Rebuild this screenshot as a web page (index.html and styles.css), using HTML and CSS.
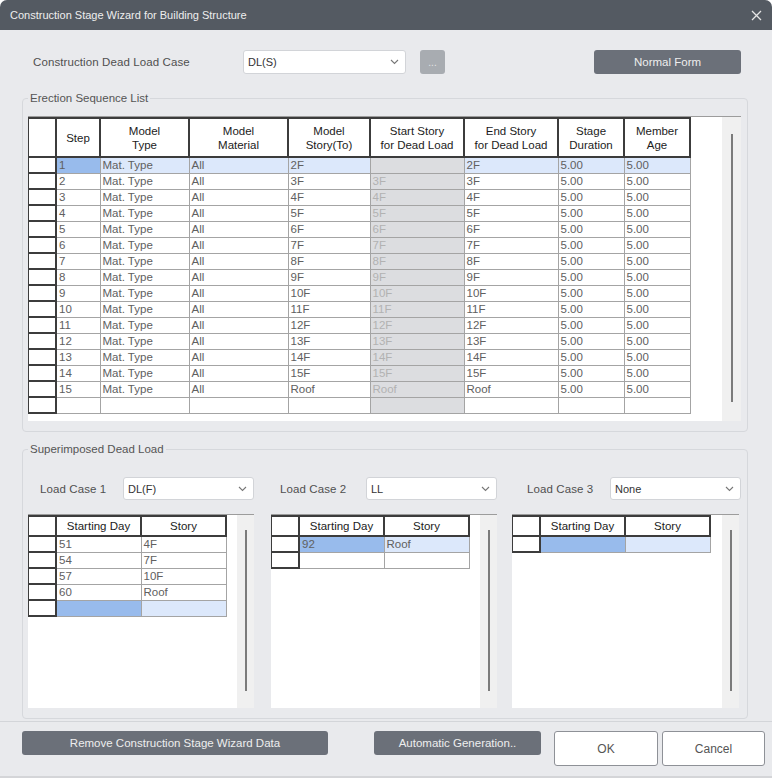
FILE: index.html
```html
<!DOCTYPE html>
<html>
<head>
<meta charset="utf-8">
<title>Construction Stage Wizard for Building Structure</title>
<link rel="stylesheet" href="styles.css">
</head>
<body>
<div class="window">
  <div class="titlebar">
    <span class="title">Construction Stage Wizard for Building Structure</span>
    <svg class="close" width="11" height="11" viewBox="0 0 11 11"><path d="M1 1 L10 10 M10 1 L1 10" stroke="#e6e6e6" stroke-width="1.3" fill="none"/></svg>
  </div>

  <div class="toprow">
    <span class="toplabel">Construction Dead Load Case</span>
    <div class="select sel-dl">
      <span>DL(S)</span>
      <svg width="9" height="6" viewBox="0 0 9 6"><path d="M1 1 L4.5 4.5 L8 1" stroke="#777" stroke-width="1.1" fill="none"/></svg>
    </div>
    <div class="btn-dots">...</div>
    <div class="btn-dark btn-normal">Normal Form</div>
  </div>

  <fieldset class="group group-erect">
    <legend>Erection Sequence List</legend>
    <div class="grid grid-main">
      <div class="grid-body">
        <table class="tbl tbl-main">
          <colgroup>
            <col style="width:28px"><col style="width:44px"><col style="width:89px"><col style="width:99px"><col style="width:82px"><col style="width:94px"><col style="width:94px"><col style="width:66px"><col style="width:66px">
          </colgroup>
          <tr><th></th><th>Step</th><th>Model<br>Type</th><th>Model<br>Material</th><th>Model<br>Story(To)</th><th>Start Story<br>for Dead Load</th><th>End Story<br>for Dead Load</th><th>Stage<br>Duration</th><th>Member<br>Age</th></tr>
          <tr class="sel"><td class="rh"></td><td class="hi">1</td><td>Mat. Type</td><td>All</td><td>2F</td><td class="ss"></td><td>2F</td><td>5.00</td><td>5.00</td></tr>
          <tr><td class="rh"></td><td>2</td><td>Mat. Type</td><td>All</td><td>3F</td><td class="ss">3F</td><td>3F</td><td>5.00</td><td>5.00</td></tr>
          <tr><td class="rh"></td><td>3</td><td>Mat. Type</td><td>All</td><td>4F</td><td class="ss">4F</td><td>4F</td><td>5.00</td><td>5.00</td></tr>
          <tr><td class="rh"></td><td>4</td><td>Mat. Type</td><td>All</td><td>5F</td><td class="ss">5F</td><td>5F</td><td>5.00</td><td>5.00</td></tr>
          <tr><td class="rh"></td><td>5</td><td>Mat. Type</td><td>All</td><td>6F</td><td class="ss">6F</td><td>6F</td><td>5.00</td><td>5.00</td></tr>
          <tr><td class="rh"></td><td>6</td><td>Mat. Type</td><td>All</td><td>7F</td><td class="ss">7F</td><td>7F</td><td>5.00</td><td>5.00</td></tr>
          <tr><td class="rh"></td><td>7</td><td>Mat. Type</td><td>All</td><td>8F</td><td class="ss">8F</td><td>8F</td><td>5.00</td><td>5.00</td></tr>
          <tr><td class="rh"></td><td>8</td><td>Mat. Type</td><td>All</td><td>9F</td><td class="ss">9F</td><td>9F</td><td>5.00</td><td>5.00</td></tr>
          <tr><td class="rh"></td><td>9</td><td>Mat. Type</td><td>All</td><td>10F</td><td class="ss">10F</td><td>10F</td><td>5.00</td><td>5.00</td></tr>
          <tr><td class="rh"></td><td>10</td><td>Mat. Type</td><td>All</td><td>11F</td><td class="ss">11F</td><td>11F</td><td>5.00</td><td>5.00</td></tr>
          <tr><td class="rh"></td><td>11</td><td>Mat. Type</td><td>All</td><td>12F</td><td class="ss">12F</td><td>12F</td><td>5.00</td><td>5.00</td></tr>
          <tr><td class="rh"></td><td>12</td><td>Mat. Type</td><td>All</td><td>13F</td><td class="ss">13F</td><td>13F</td><td>5.00</td><td>5.00</td></tr>
          <tr><td class="rh"></td><td>13</td><td>Mat. Type</td><td>All</td><td>14F</td><td class="ss">14F</td><td>14F</td><td>5.00</td><td>5.00</td></tr>
          <tr><td class="rh"></td><td>14</td><td>Mat. Type</td><td>All</td><td>15F</td><td class="ss">15F</td><td>15F</td><td>5.00</td><td>5.00</td></tr>
          <tr><td class="rh"></td><td>15</td><td>Mat. Type</td><td>All</td><td>Roof</td><td class="ss">Roof</td><td>Roof</td><td>5.00</td><td>5.00</td></tr>
          <tr><td class="rh"></td><td></td><td></td><td></td><td></td><td class="ss"></td><td></td><td></td><td></td></tr>
        </table>
      </div>
      <div class="vscroll vscroll-main"><div class="thumb"></div></div>
    </div>
  </fieldset>

  <fieldset class="group group-super">
    <legend>Superimposed Dead Load</legend>
    <div class="cases">
      <div class="case case1">
        <div class="caserow">
          <span class="caselabel">Load Case 1</span>
          <div class="select sel-case"><span>DL(F)</span><svg width="9" height="6" viewBox="0 0 9 6"><path d="M1 1 L4.5 4.5 L8 1" stroke="#777" stroke-width="1.1" fill="none"/></svg></div>
        </div>
        <div class="grid grid-sub">
          <div class="grid-body">
            <table class="tbl tbl-sub">
              <colgroup><col style="width:28px"><col style="width:85px"><col style="width:85px"></colgroup>
              <tr><th></th><th>Starting Day</th><th>Story</th></tr>
              <tr><td class="rh"></td><td>51</td><td>4F</td></tr>
              <tr><td class="rh"></td><td>54</td><td>7F</td></tr>
              <tr><td class="rh"></td><td>57</td><td>10F</td></tr>
              <tr><td class="rh"></td><td>60</td><td>Roof</td></tr>
              <tr class="sel"><td class="rh"></td><td class="hi"></td><td></td></tr>
            </table>
          </div>
          <div class="vscroll vscroll-sub"><div class="thumb"></div></div>
        </div>
      </div>
      <div class="case case2">
        <div class="caserow">
          <span class="caselabel">Load Case 2</span>
          <div class="select sel-case"><span>LL</span><svg width="9" height="6" viewBox="0 0 9 6"><path d="M1 1 L4.5 4.5 L8 1" stroke="#777" stroke-width="1.1" fill="none"/></svg></div>
        </div>
        <div class="grid grid-sub">
          <div class="grid-body">
            <table class="tbl tbl-sub">
              <colgroup><col style="width:28px"><col style="width:85px"><col style="width:85px"></colgroup>
              <tr><th></th><th>Starting Day</th><th>Story</th></tr>
              <tr class="sel"><td class="rh"></td><td class="hi">92</td><td>Roof</td></tr>
              <tr><td class="rh"></td><td></td><td></td></tr>
            </table>
          </div>
          <div class="vscroll vscroll-sub"><div class="thumb"></div></div>
        </div>
      </div>
      <div class="case case3">
        <div class="caserow">
          <span class="caselabel">Load Case 3</span>
          <div class="select sel-case"><span>None</span><svg width="9" height="6" viewBox="0 0 9 6"><path d="M1 1 L4.5 4.5 L8 1" stroke="#777" stroke-width="1.1" fill="none"/></svg></div>
        </div>
        <div class="grid grid-sub grid-sub3">
          <div class="grid-body">
            <table class="tbl tbl-sub">
              <colgroup><col style="width:28px"><col style="width:85px"><col style="width:85px"></colgroup>
              <tr><th></th><th>Starting Day</th><th>Story</th></tr>
              <tr class="sel"><td class="rh"></td><td class="hi"></td><td></td></tr>
            </table>
          </div>
          <div class="vscroll vscroll-sub"><div class="thumb"></div></div>
        </div>
      </div>
    </div>
  </fieldset>

  <div class="footer">
    <div class="btn-dark btn-remove">Remove Construction Stage Wizard Data</div>
    <div class="btn-dark btn-auto">Automatic Generation..</div>
    <div class="btn-light btn-ok">OK</div>
    <div class="btn-light btn-cancel">Cancel</div>
  </div>
</div>
</body>
</html>
```

FILE: styles.css
```css
* { box-sizing: border-box; }

body {
  margin: 0;
  background: #ffffff;
  font-family: "Liberation Sans", Arial, sans-serif;
}

.window {
  width: 772px;
  height: 778px;
  background: #e9eaed;
  display: flex;
  flex-direction: column;
  border-radius: 7px 7px 0 0;
  overflow: hidden;
  border-bottom: 2px solid #d4d5d8;
}

.titlebar {
  height: 30px;
  flex: none;
  background: #545a62;
  color: #eeeeee;
  font-size: 11px;
  display: flex;
  align-items: center;
  justify-content: space-between;
  padding: 0 10px 0 10px;
}

/* top row */
.toprow {
  margin-top: 20px;
  height: 24px;
  display: flex;
  align-items: center;
  padding-left: 33px;
  padding-right: 31px;
  flex: none;
}

.toplabel {
  width: 210px;
  font-size: 11.5px;
  color: #505050;
  letter-spacing: 0.1px;
}

.select {
  height: 24px;
  background: #ffffff;
  border: 1px solid #d2d4d8;
  border-radius: 3px;
  display: flex;
  align-items: center;
  justify-content: space-between;
  padding: 0 6px 0 4px;
  font-size: 11px;
  color: #333333;
}

.sel-dl { width: 163px; }

.btn-dots {
  margin-left: 14px;
  width: 25px;
  height: 24px;
  background: #a8acb1;
  border-radius: 3px;
  color: #e4e4e4;
  font-size: 10px;
  display: flex;
  align-items: center;
  justify-content: center;
}

.btn-dark {
  background: #6b7079;
  border-radius: 3px;
  color: #eeeeee;
  font-size: 11.5px;
  height: 24px;
  display: flex;
  align-items: center;
  justify-content: center;
}

.btn-normal {
  margin-left: auto;
  width: 147px;
}

/* group boxes */
.group {
  margin: 0 0 0 22px;
  width: 726px;
  border: 1px solid #d6d8dc;
  border-radius: 4px;
  min-width: 0;
  flex: none;
}

.group legend {
  font-size: 11.5px;
  line-height: 14px;
  color: #555555;
  padding: 0 2px;
}

.group-erect {
  margin-top: 17px;
  padding: 11px 6px 10px 5px;
}

.group-super {
  margin-top: 10px;
  padding: 21px 6px 10px 5px;
}

/* grids */
.grid {
  display: flex;
  background: #ffffff;
  border-top: 1px solid #9c9c9c;
}

.grid-main { height: 305px; }

.grid-body {
  flex: 1;
  overflow: hidden;
}

.vscroll {
  background: #f0f0f0;
  display: flex;
  flex-direction: column;
  align-items: center;
}

.vscroll-main {
  width: 19px;
  padding: 17px 0 19px;
}

.vscroll-sub {
  width: 17px;
  padding: 15px 0 17px;
}

.thumb {
  width: 2px;
  flex: 1;
  background: #7b7b7b;
}

.tbl {
  border-collapse: collapse;
  table-layout: fixed;
  font-size: 11.5px;
  margin-left: -1px;
}

.tbl-main { width: 662px; }
.tbl-sub { width: 198px; }

.tbl th {
  border: 2px solid #3c3c3c;
  font-weight: normal;
  color: #1c1c1c;
  line-height: 14px;
  padding: 0;
  text-align: center;
  background: #ffffff;
}

.tbl-main th { height: 39px; }
.tbl-sub th { height: 20px; }

.tbl td {
  height: 16px;
  border: 1px solid #a4a4a4;
  padding: 0 2px;
  line-height: 14px;
  color: #606060;
  white-space: nowrap;
  overflow: hidden;
  background: #ffffff;
}

.tbl td.rh { border: 2px solid #3c3c3c; background: #ffffff; }
.tbl td.ss { background: #dcdde0; color: #b2b2b2; }
.tbl tr.sel td { background: #dce8fb; }
.tbl tr.sel td.rh { background: #ffffff; }
.tbl tr.sel td.ss { background: #dcdde0; }
.tbl tr.sel td.hi { background: #98bbec; }

/* superimposed */
.cases {
  display: flex;
}

.case {
  display: flex;
  flex-direction: column;
}

.case1 { width: 226px; }
.case2 { width: 226px; margin-left: 17px; }
.case3 { width: 229px; margin-left: 15px; }

.caserow {
  height: 23px;
  display: flex;
  align-items: center;
}

.caselabel {
  font-size: 11.5px;
  color: #505050;
  letter-spacing: 0.1px;
}

.case1 .caselabel { padding-left: 12px; }
.case2 .caselabel { padding-left: 9px; }
.case3 .caselabel { padding-left: 15px; }

.sel-case {
  margin-left: auto;
  width: 131px;
  height: 23px;
}

.grid-sub {
  margin-top: 14px;
  height: 194px;
}

.grid-sub3 { margin-right: 2px; }

/* footer */
.footer {
  margin-top: 2px;
  border-top: 1px solid #d3d5d9;
  padding: 9px 0 0 22px;
  display: flex;
  align-items: flex-start;
  flex: 1;
}

.btn-remove { width: 306px; }
.btn-auto { width: 167px; margin-left: 46px; }

.btn-light {
  height: 35px;
  background: #ffffff;
  border: 1px solid #8e9197;
  border-radius: 3px;
  color: #555555;
  font-size: 12px;
  display: flex;
  align-items: center;
  justify-content: center;
}

.btn-ok { width: 104px; margin-left: 13px; }
.btn-cancel { width: 103px; margin-left: 4px; }
```
